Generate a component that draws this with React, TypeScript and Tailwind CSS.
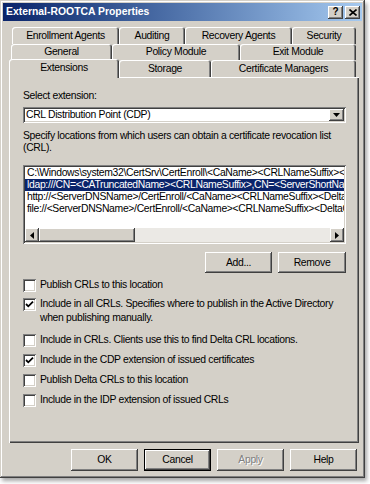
import React from "react";

const raised =
  "shadow-[inset_-1px_-1px_#404040,inset_1px_1px_#ffffff,inset_-2px_-2px_#808080,inset_2px_2px_#d4d0c8]";
const sunken =
  "shadow-[inset_1px_1px_#808080,inset_-1px_-1px_#ffffff,inset_2px_2px_#404040,inset_-2px_-2px_#d4d0c8]";
const tabEdge =
  "shadow-[inset_1px_1px_#ffffff,inset_-1px_0_#404040,inset_-2px_0_#808080]";

const Tab: React.FC<{ label: string; w: string; h?: string; active?: boolean }> = ({
  label,
  w,
  h = "h-full",
  active,
}) => (
  <div
    className={`${w} ${h} ${tabEdge} flex items-center justify-center bg-[#d4d0c8] rounded-t-[3px] ${
      active ? "relative z-10 -mb-px pb-[2px]" : ""
    }`}
  >
    {label}
  </div>
);

const Btn: React.FC<{ label: string; w?: string; disabled?: boolean; def?: boolean }> = ({
  label,
  w = "w-[67px] h-[22px]",
  disabled,
  def,
}) => (
  <div
    className={`${w} flex items-center justify-center bg-[#d4d0c8] ${
      def
        ? "shadow-[inset_0_0_0_1px_#000000,inset_-2px_-2px_#404040,inset_2px_2px_#ffffff,inset_-3px_-3px_#808080]"
        : raised
    } ${disabled ? "text-[#808080] [text-shadow:1px_1px_#ffffff]" : "text-black"}`}
  >
    {label}
  </div>
);

const Check: React.FC<{ checked?: boolean; children: React.ReactNode; className?: string }> = ({
  checked,
  children,
  className = "",
}) => (
  <div className={`flex items-start leading-[14px] ${className}`}>
    <div className={`w-[13px] h-[13px] mt-px bg-white shrink-0 ${sunken} flex items-center justify-center`}>
      {checked && (
        <svg width="9" height="9" viewBox="0 0 9 9">
          <path d="M1 4 L3.3 6.3 L8 1.6" stroke="#000" strokeWidth="1.8" fill="none" />
        </svg>
      )}
    </div>
    <div className="ml-[4px]">{children}</div>
  </div>
);

const rows = [
  "C:\\Windows\\system32\\CertSrv\\CertEnroll\\<CaName><CRLNameSuffix><DeltaCRLAllowed>.crl",
  "ldap:///CN=<CATruncatedName><CRLNameSuffix>,CN=<ServerShortName>,CN=CDP,CN=Public Key Services",
  "http://<ServerDNSName>/CertEnroll/<CaName><CRLNameSuffix><DeltaCRLAllowed>.crl",
  "file://<ServerDNSName>/CertEnroll/<CaName><CRLNameSuffix><DeltaCRLAllowed>.crl",
];

export default function App() {
  return (
    <div className="min-h-screen bg-white font-['Liberation_Sans',Arial,sans-serif] text-[10.4px] tracking-[-0.33px] text-black">
      <div className="w-[365px] h-[478px] bg-[#d4d0c8] p-[3px] flex flex-col shadow-[inset_-1px_-1px_#404040,inset_1px_1px_#d4d0c8,inset_-2px_-2px_#808080,inset_2px_2px_#ffffff,2px_3px_4px_rgba(0,0,0,0.35)]">
        {/* title bar */}
        <div className="h-[18px] flex items-center bg-linear-to-r from-[#0a246a] to-[#a6caf0] pl-[3px] pr-[2px]">
          <span className="text-white font-bold text-[10.4px] tracking-normal">External-ROOTCA Properties</span>
          <div className="ml-auto flex gap-[2px]">
            <div className={`w-[15px] h-[13px] bg-[#d4d0c8] ${raised} flex items-center justify-center font-bold text-[10px] leading-none`}>
              ?
            </div>
            <div className={`w-[15px] h-[13px] bg-[#d4d0c8] ${raised} flex items-center justify-center`}>
              <svg width="8" height="7" viewBox="0 0 8 7">
                <path d="M0.5 0.5 L7.5 6.5 M7.5 0.5 L0.5 6.5" stroke="#000" strokeWidth="1.6" />
              </svg>
            </div>
          </div>
        </div>

        {/* tabs */}
        <div className="mt-[6px] ml-[6px] w-[350px] flex flex-col">
          <div className="flex h-[17px] pl-[3px]">
            <Tab label="Enrollment Agents" w="w-[107px]" />
            <Tab label="Auditing" w="w-[66px]" />
            <Tab label="Recovery Agents" w="w-[107px]" />
            <Tab label="Security" w="w-[64px]" />
          </div>
          <div className="flex h-[16px] pl-[2px]">
            <Tab label="General" w="w-[101px]" />
            <Tab label="Policy Module" w="w-[128px]" />
            <Tab label="Exit Module" w="w-[116px]" />
          </div>
          <div className="flex h-[17px] items-end">
            <Tab label="Extensions" w="w-[110px]" h="h-[19px]" active />
            <Tab label="Storage" w="w-[92px]" />
            <Tab label="Certificate Managers" w="w-[145px]" />
          </div>
        </div>

        {/* panel */}
        <div className="ml-[6px] w-[350px] h-[366px] pl-[14px] pr-[13px] pt-[12px] shadow-[inset_1px_1px_#ffffff,inset_-1px_-1px_#404040,inset_-2px_-2px_#808080]">
          <div className="leading-[13px]">Select extension:</div>
          <div className={`mt-[5px] h-[16px] bg-white ${sunken} flex items-center pl-[3px] pr-[2px]`}>
            <span>CRL Distribution Point (CDP)</span>
            <div className={`ml-auto w-[15px] h-[12px] bg-[#d4d0c8] ${raised} flex items-center justify-center`}>
              <svg width="7" height="4" viewBox="0 0 7 4">
                <path d="M0 0 H7 L3.5 4 Z" fill="#000" />
              </svg>
            </div>
          </div>
          <div className="mt-[7px] leading-[12px]">
            Specify locations from which users can obtain a certificate revocation list (CRL).
          </div>
          <div className={`mt-[11px] h-[79px] bg-white ${sunken} p-[2px] flex flex-col`}>
            <div className="flex-1 overflow-hidden">
              {rows.map((r, i) => (
                <div
                  key={i}
                  className={`h-[12px] leading-[12px] pl-[2px] whitespace-nowrap ${
                    i === 1 ? "bg-[#0a246a] text-white" : ""
                  }`}
                >
                  {r}
                </div>
              ))}
            </div>
            <div className="h-[14px] flex bg-[#ebe9e5]">
              <div className={`w-[14px] bg-[#d4d0c8] ${raised} flex items-center justify-center`}>
                <svg width="4" height="7" viewBox="0 0 4 7">
                  <path d="M4 0 V7 L0 3.5 Z" fill="#000" />
                </svg>
              </div>
              <div className={`w-[96px] bg-[#d4d0c8] ${raised}`} />
              <div className="flex-1" />
              <div className={`w-[14px] bg-[#d4d0c8] ${raised} flex items-center justify-center`}>
                <svg width="4" height="7" viewBox="0 0 4 7">
                  <path d="M0 0 V7 L4 3.5 Z" fill="#000" />
                </svg>
              </div>
            </div>
          </div>
          <div className="mt-[8px] flex justify-end gap-[6px]">
            <Btn label="Add..." w="w-[67px] h-[21px]" />
            <Btn label="Remove" w="w-[68px] h-[21px]" />
          </div>
          <Check className="mt-[5px]">Publish CRLs to this location</Check>
          <Check checked className="mt-[5px]">
            Include in all CRLs. Specifies where to publish in the Active Directory when publishing manually.
          </Check>
          <Check className="mt-[8px]">Include in CRLs. Clients use this to find Delta CRL locations.</Check>
          <Check checked className="mt-[6px]">Include in the CDP extension of issued certificates</Check>
          <Check className="mt-[6px]">Publish Delta CRLs to this location</Check>
          <Check className="mt-[6px]">Include in the IDP extension of issued CRLs</Check>
        </div>

        {/* dialog buttons */}
        <div className="mt-[6px] mr-[5px] flex justify-end gap-[6px]">
          <Btn label="OK" />
          <Btn label="Cancel" def />
          <Btn label="Apply" disabled />
          <Btn label="Help" />
        </div>
      </div>
    </div>
  );
}
